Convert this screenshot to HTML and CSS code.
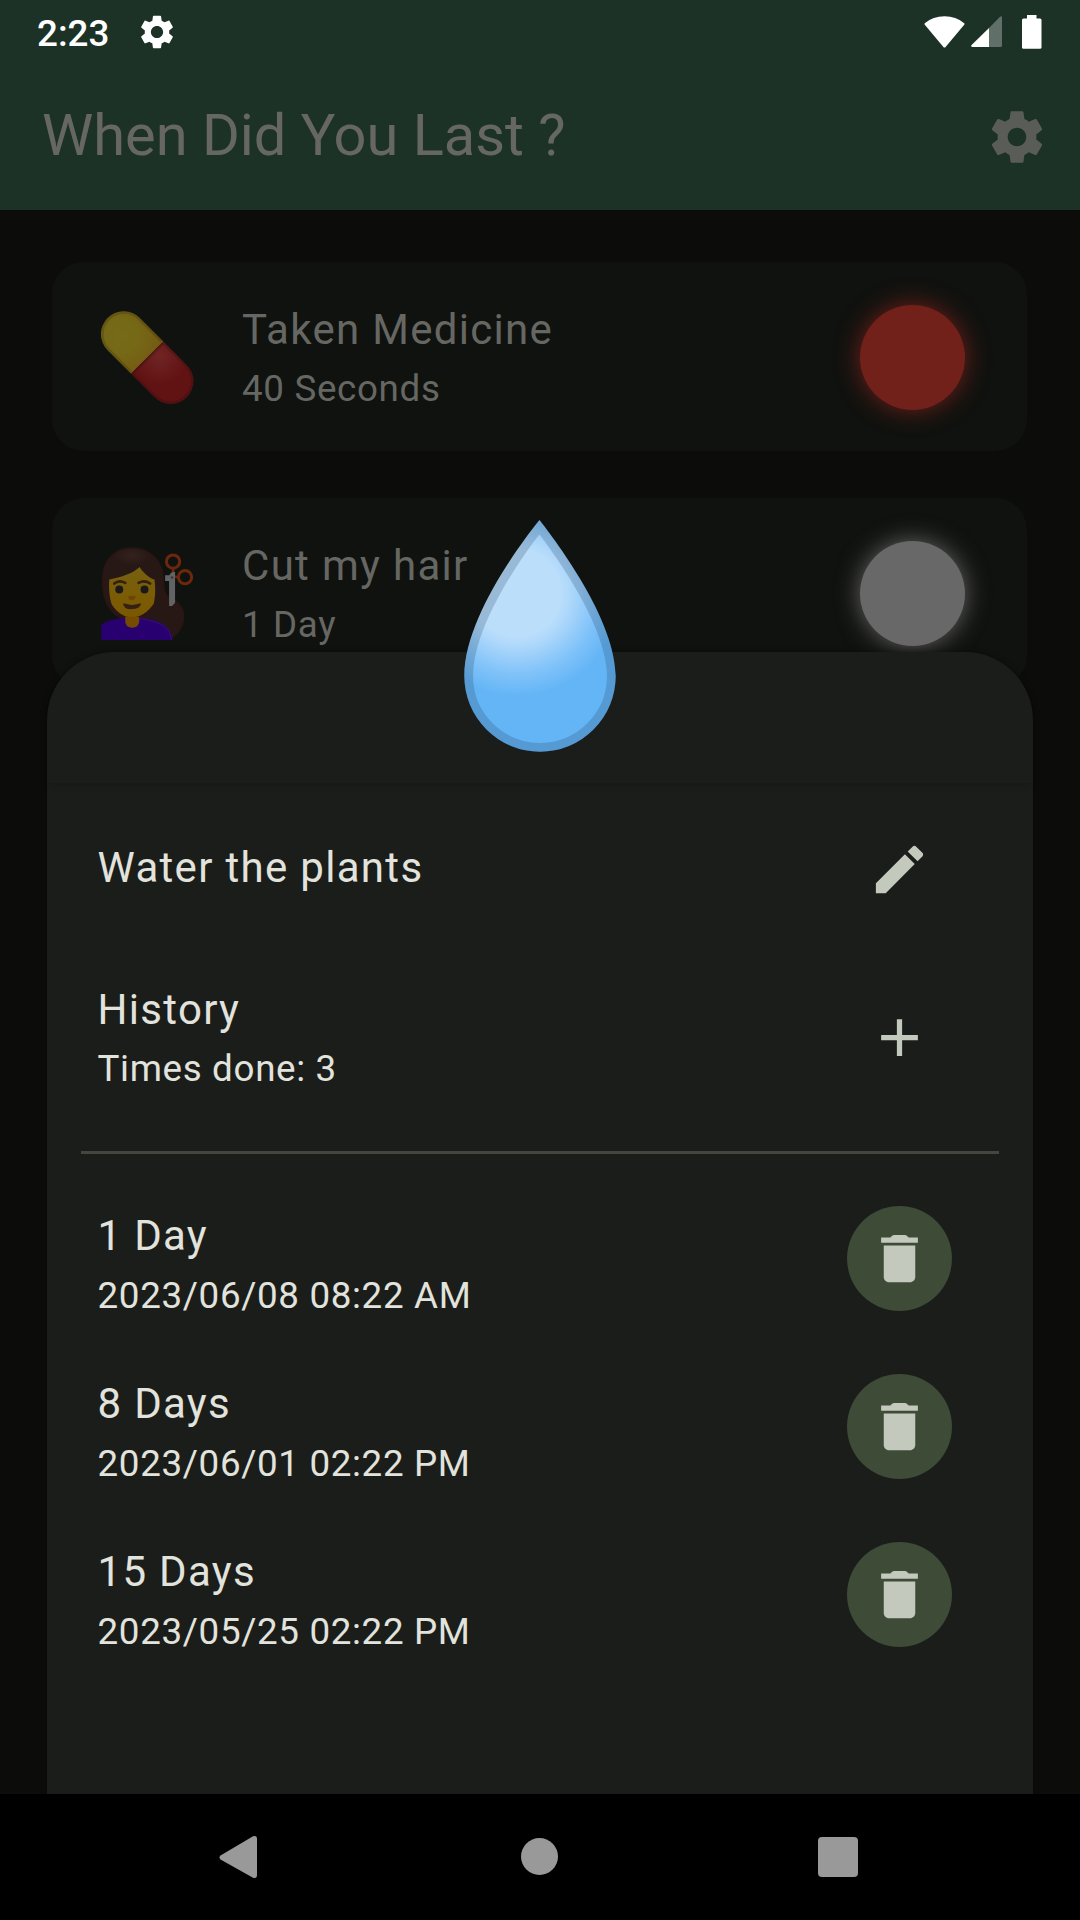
FILE: index.html
```
<!DOCTYPE html>
<html lang="en">
<head>
  <meta charset="UTF-8">
  <title>When Did You Last ?</title>
  <link rel="stylesheet" href="styles.css">
</head>
<body>
  <div class="status-bar">
    <span class="clock">2:23</span>
    <svg class="status-gear" viewBox="2 2 20 20"><path d="M19.14 12.94c.04-.3.06-.61.06-.94 0-.32-.02-.64-.07-.94l2.03-1.58c.18-.14.23-.41.12-.61l-1.92-3.32c-.12-.22-.37-.29-.59-.22l-2.39.96c-.5-.38-1.03-.7-1.62-.94l-.36-2.54c-.04-.24-.24-.41-.48-.41h-3.84c-.24 0-.43.17-.47.41l-.36 2.54c-.59.24-1.13.57-1.62.94l-2.39-.96c-.22-.08-.47 0-.59.22L2.74 8.87c-.12.21-.08.47.12.61l2.03 1.58c-.05.3-.09.63-.09.94s.02.64.07.94l-2.03 1.58c-.18.14-.23.41-.12.61l1.92 3.32c.12.22.37.29.59.22l2.39-.96c.5.38 1.03.7 1.62.94l.36 2.54c.05.24.24.41.48.41h3.84c.24 0 .44-.17.47-.41l.36-2.54c.59-.24 1.13-.56 1.62-.94l2.39.96c.22.08.47 0 .59-.22l1.92-3.32c.12-.22.07-.47-.12-.61l-2.01-1.58zM12 15.6c-1.98 0-3.6-1.62-3.6-3.6s1.62-3.6 3.6-3.6 3.6 1.62 3.6 3.6-1.62 3.6-3.6 3.6z"/></svg>
    <div class="status-icons">
      <svg width="41" height="32" viewBox="0 0 41 32"><path d="M.8 7.2Q9 .3 20.5.3T40.2 7.2q.6.7 0 1.500L21.6 31q-1.100 1.100-2.200 0L.8 8.700q-.6-.8 0-1.500z"/></svg>
      <svg class="signal" width="31" height="31" viewBox="0 0 31 31"><path d="M18 12 29 .8Q31-.6 31 1.500V29.500q0 1.500-1.500 1.500H18z" opacity=".3"/><path d="M18 12V31H1.200q-1.900-.4-.6-2z"/></svg>
      <svg class="battery" width="20" height="34" viewBox="0 0 20 34"><path d="M5 0h9.500v3.500h3.500q1.500 0 1.500 1.500v27.500q0 1.300-1.500 1.300h-16.500q-1.500 0-1.500-1.300V5q0-1.500 1.500-1.500H5z"/></svg>
    </div>
  </div>

  <div class="app-bar">
    <h1 class="app-title">When Did You Last ?</h1>
    <svg class="settings" viewBox="0 0 24 24"><path d="M19.43 12.98c.04-.32.07-.64.07-.98s-.03-.66-.07-.98l2.110-1.650c.19-.15.24-.42.12-.64l-2-3.460c-.12-.22-.39-.3-.61-.22l-2.490 1c-.52-.4-1.080-.73-1.690-.98l-.38-2.650C14.460 2.180 14.250 2 14 2h-4c-.25 0-.46.18-.49.42l-.38 2.650c-.61.25-1.170.59-1.690.98l-2.490-1c-.23-.09-.49 0-.61.22l-2 3.460c-.13.22-.07.49.12.64l2.110 1.650c-.04.32-.07.65-.07.98s.03.66.07.98l-2.110 1.650c-.19.15-.24.42-.12.64l2 3.460c.12.22.39.3.61.22l2.490-1c.52.4 1.080.73 1.690.98l.38 2.650c.03.24.24.42.49.42h4c.25 0 .46-.18.49-.42l.38-2.650c.61-.25 1.170-.59 1.690-.98l2.490 1c.23.09.49 0 .61-.22l2-3.460c.12-.22.07-.49-.12-.64l-2.110-1.650zM12 15.600c-1.980 0-3.600-1.620-3.600-3.600s1.620-3.600 3.600-3.600 3.600 1.620 3.600 3.600-1.620 3.600-3.600 3.600z"/></svg>
  </div>

  <main class="content">
    <div class="card">
      <svg class="emoji" viewBox="0 0 93 93">
        <defs>
          <radialGradient id="pillYellow" gradientUnits="userSpaceOnUse" cx="-34" cy="3" r="44">
            <stop offset="0" stop-color="#766b18"/>
            <stop offset=".4" stop-color="#756816"/>
            <stop offset="1" stop-color="#765812"/>
          </radialGradient>
          <radialGradient id="pillRed" gradientUnits="userSpaceOnUse" cx="8" cy="-10" r="28">
            <stop offset="0" stop-color="#702424"/>
            <stop offset="1" stop-color="#611314"/>
          </radialGradient>
        </defs>
        <g transform="translate(46.200 46.600) rotate(45)">
          <path d="M0-22.800H-33.200a22.800 22.800 0 0 0 0 45.600H0z" fill="url(#pillYellow)"/>
          <path d="M0-22.800H33.200a22.800 22.800 0 0 1 0 45.600H0z" fill="url(#pillRed)"/>
          <path d="M-1-21.500H-33a21.500 21.500 0 0 0 0 43H-1" fill="none" stroke="#000" stroke-opacity=".15" stroke-width="2.500"/>
          <path d="M1-21.500H33a21.500 21.500 0 0 1 0 43H1z" fill="none" stroke="#000" stroke-opacity=".15" stroke-width="2.500"/>
        </g>
      </svg>
      <div class="card-text">
        <div class="title">Taken Medicine</div>
        <div class="subtitle">40 Seconds</div>
      </div>
      <div class="dot dot-red"></div>
    </div>

    <div class="card">
      <svg class="emoji" viewBox="0 0 278 280">
        <defs>
          <radialGradient id="hairShine" gradientUnits="userSpaceOnUse" cx="92" cy="26" r="60" gradientTransform="translate(0 13) scale(1 .5)">
            <stop offset="0" stop-color="#33211d"/>
            <stop offset="1" stop-color="#271815"/>
          </radialGradient>
          <linearGradient id="face" x1="0" y1="0" x2="0" y2="1">
            <stop offset="0" stop-color="#776011"/>
            <stop offset=".6" stop-color="#7a5c05"/>
            <stop offset="1" stop-color="#7a5700"/>
          </linearGradient>
        </defs>
        <!-- hair behind -->
        <path d="M92 3C150 3 184 45 186 95C188 125 187 142 205 155C258 170 262 235 215 271L120 235L60 214C22 195 4 160 4 100C4 40 40 3 92 3z" fill="url(#hairShine)" stroke="#2a1511" stroke-width="5"/>
        <path d="M24 98C60 90 95 80 115 60C128 80 146 94 160 98C164 130 162 150 158 170C140 198 115 212 92 212C68 212 45 195 31 172C24 150 22 120 24 98z" fill="url(#face)"/>
        <!-- shirt and neck -->
        <path d="M0 233C25 218 50 215 72 213H114C165 218 210 232 214 280H0z" fill="#290070"/>
        <path d="M114 216C165 221 209 236 211 280" fill="none" stroke="#3a1176" stroke-width="3"/>
        <path d="M72 210H114V225Q112 243 93 243T72 225z" fill="#764b00"/>
        <!-- face -->
        <path d="M39 110Q53 98 72 108M112 108Q130 98 147 110" fill="none" stroke="#34200d" stroke-width="8" stroke-linecap="round"/>
        <circle cx="54" cy="128" r="12" fill="#1b1a19"/>
        <circle cx="130" cy="128" r="12" fill="#1b1a19"/>
        <path d="M81 149Q92 145 104 149Q102 159 92 160T81 149z" fill="#704300"/>
        <path d="M66 172Q66 167 73 171Q92 178 112 171Q119 167 119 172Q116 186 92 187T66 172z" fill="#352013"/>
        <!-- scissors -->
        <path d="M216 65V88L234 92" fill="none" stroke="#6d270d" stroke-width="8"/>
        <circle cx="216" cy="44" r="20" fill="none" stroke="#6d270d" stroke-width="9"/>
        <circle cx="252" cy="91" r="20" fill="none" stroke="#6d270d" stroke-width="9"/>
        <path d="M192 85H205Q208 74 222 75V168L213 178H204V102H192z" fill="#626364"/>
        <circle cx="213" cy="92" r="4" fill="#3b3b3b"/>
      </svg>
      <div class="card-text">
        <div class="title">Cut my hair</div>
        <div class="subtitle">1 Day</div>
      </div>
      <div class="dot dot-grey"></div>
    </div>

    <div class="sheet">
      <div class="sheet-header"></div>
      <svg class="drop" viewBox="0 0 152 232">
        <defs>
          <radialGradient id="water" gradientUnits="userSpaceOnUse" cx="53" cy="73" r="103" gradientTransform="rotate(20 53 73)">
            <stop offset=".42" stop-color="#bbdefb"/>
            <stop offset=".5" stop-color="#b1d9fb"/>
            <stop offset=".78" stop-color="#81c3f9"/>
            <stop offset="1" stop-color="#64b5f6"/>
          </radialGradient>
          <clipPath id="dropClip">
            <path id="dropShape" d="M75.500 0C101 33 151 103 151.700 156A75.700 75.700 0 0 1 .3 156C.3 103 49 33 75.500 0z"/>
          </clipPath>
        </defs>
        <use href="#dropShape" fill="url(#water)"/>
        <use href="#dropShape" fill="none" stroke="#1f3c55" stroke-opacity=".22" stroke-width="17.500" clip-path="url(#dropClip)"/>
      </svg>

      <div class="sheet-body">
        <div class="row row-name">
          <div class="title">Water the plants</div>
          <div class="icon-button">
            <svg viewBox="0 0 24 24"><path d="M3 17.250V21h3.750L17.810 9.940l-3.750-3.750L3 17.250zM20.710 7.040c.39-.39.39-1.020 0-1.410l-2.340-2.340c-.39-.39-1.020-.39-1.410 0l-1.830 1.830 3.750 3.750 1.830-1.830z"/></svg>
          </div>
        </div>
        <div class="row row-history">
          <div>
            <div class="title">History</div>
            <div class="subtitle">Times done: 3</div>
          </div>
          <div class="icon-button">
            <svg viewBox="0 0 24 24"><path d="M19 13h-6v6h-2v-6H5v-2h6V5h2v6h6v2z"/></svg>
          </div>
        </div>
        <hr class="divider">
        <div class="row row-entry">
          <div>
            <div class="title">1 Day</div>
            <div class="subtitle">2023/06/08 08:22 AM</div>
          </div>
          <div class="icon-button filled">
            <svg viewBox="0 0 24 24"><path d="M6 19c0 1.100.9 2 2 2h8c1.100 0 2-.9 2-2V7H6v12zM19 4h-3.500l-.71-.71c-.18-.18-.44-.29-.7-.29H9.910c-.26 0-.52.11-.7.29L8.500 4H5v2h14V4z"/></svg>
          </div>
        </div>
        <div class="row row-entry">
          <div>
            <div class="title">8 Days</div>
            <div class="subtitle">2023/06/01 02:22 PM</div>
          </div>
          <div class="icon-button filled">
            <svg viewBox="0 0 24 24"><path d="M6 19c0 1.100.9 2 2 2h8c1.100 0 2-.9 2-2V7H6v12zM19 4h-3.500l-.71-.71c-.18-.18-.44-.29-.7-.29H9.910c-.26 0-.52.11-.7.29L8.500 4H5v2h14V4z"/></svg>
          </div>
        </div>
        <div class="row row-entry">
          <div>
            <div class="title">15 Days</div>
            <div class="subtitle">2023/05/25 02:22 PM</div>
          </div>
          <div class="icon-button filled">
            <svg viewBox="0 0 24 24"><path d="M6 19c0 1.100.9 2 2 2h8c1.100 0 2-.9 2-2V7H6v12zM19 4h-3.500l-.71-.71c-.18-.18-.44-.29-.7-.29H9.910c-.26 0-.52.11-.7.29L8.500 4H5v2h14V4z"/></svg>
          </div>
        </div>
      </div>
    </div>
  </main>

  <div class="nav-bar">
    <svg width="40" height="44" viewBox="0 0 40 44"><path d="M1.500 20.500 34 1.300Q38 0 38 4V40Q38 44 34 42.700L1.500 24.500Q-.5 22.500 1.500 20.500z"/></svg>
    <div class="nav-home"></div>
    <div class="nav-recent"></div>
  </div>
</body>
</html>
```

FILE: styles.css
```
* {
  box-sizing: border-box;
}

body {
  margin: 0;
  height: 1920px;
  display: flex;
  flex-direction: column;
  overflow: hidden;
  background-color: #0c0c0b;
  color: #666763;
  font-family: Roboto, sans-serif;
}

svg {
  display: block;
  fill: currentColor;
}

/* top bars */
.status-bar {
  display: flex;
  align-items: center;
  height: 63px;
  padding: 0 38px 0 37px;
  background-color: #1c3227;
  color: #fff;
}

.clock {
  width: 103px;
  font-size: 36.75px;
  font-weight: 500;
  line-height: 62px;
  padding-top: 4px;
}

.status-gear {
  width: 34px;
  height: 34px;
}

.status-icons {
  display: flex;
  align-items: center;
  margin-left: auto;
}

.signal {
  margin-left: 6px;
}

.battery {
  margin-left: 20px;
}

.app-bar {
  display: flex;
  justify-content: space-between;
  align-items: center;
  height: 147px;
  padding: 0 32px 0 42px;
  background-color: #1c3227;
}

.app-title {
  margin: 0;
  padding-bottom: 3px;
  font-size: 57.75px;
  font-weight: 400;
}

.settings {
  width: 62px;
  height: 62px;
  color: #5a5d57;
}

/* list behind the sheet */
.content {
  position: relative;
  flex: 1;
  display: flex;
  flex-direction: column;
  gap: 47px;
  padding: 52px 53px 0 52px;
}

.card {
  display: flex;
  align-items: center;
  height: 189px;
  flex-shrink: 0;
  padding: 2px 62.5px 0 48.5px;
  border-radius: 31.5px;
  background-color: #10120f;
}

.emoji {
  width: 93px;
  height: 93px;
  margin-right: 48.5px;
}

.card-text {
  flex: 1;
}

.title {
  font-size: 42px;
  line-height: 63px;
  letter-spacing: 1.31px;
}

.subtitle {
  font-size: 36.75px;
  line-height: 56px;
  letter-spacing: 0.66px;
}

.dot {
  width: 105px;
  height: 105px;
  border-radius: 50%;
}

.dot-red {
  background-color: #72201a;
  box-shadow: 0 0 24px #72201a;
}

.dot-grey {
  background-color: #686868;
  box-shadow: 0 0 24px #686868;
}

/* bottom sheet */
.sheet {
  position: absolute;
  left: 47px;
  right: 47px;
  top: 442px;
  bottom: 0;
  border-radius: 68px 68px 0 0;
  background-color: #1b1d1a;
  color: #e2e3dd;
  box-shadow: 0 0 6px rgba(0, 0, 0, 0.35);
}

.sheet-header {
  height: 131px;
  border-radius: 68px 68px 0 0;
  box-shadow: 0 5px 7px -3px rgba(0, 0, 0, 0.2);
}

/* overlaps the top edge of the sheet */
.drop {
  position: absolute;
  left: 416.5px;
  top: -132px;
  width: 152px;
  height: 232px;
}

.row {
  display: flex;
  justify-content: space-between;
  padding: 0 81.5px 0 50.5px;
}

.row-name {
  height: 194px;
  padding-top: 34px;
}

.row-name .title {
  line-height: 101px;
}

.row-history {
  height: 174px;
  padding-top: 1px;
}

.row-history .icon-button {
  margin-top: 7px;
}

.divider {
  height: 3px;
  margin: 0 34px;
  border: none;
  background-color: #434740;
}

.row-entry {
  height: 168px;
}

.divider + .row-entry {
  margin-top: 50px;
}

.row-entry .subtitle {
  line-height: 58px;
}

.icon-button {
  display: flex;
  align-items: center;
  justify-content: center;
  width: 105px;
  height: 105px;
  border-radius: 50%;
  color: #c3c9bd;
}

.icon-button svg {
  width: 63px;
  height: 63px;
}

.icon-button.filled {
  margin-top: 1.5px;
  background-color: #3d4b37;
}

/* android navigation */
.nav-bar {
  display: flex;
  align-items: center;
  justify-content: space-between;
  height: 126px;
  padding: 0 222px 1px 219px;
  background-color: #000;
  color: #999;
}

.nav-home {
  width: 37px;
  height: 37px;
  margin-left: 1px;
  border-radius: 50%;
  background-color: #999;
}

.nav-recent {
  width: 40px;
  height: 40px;
  border-radius: 4px;
  background-color: #999;
}
```
